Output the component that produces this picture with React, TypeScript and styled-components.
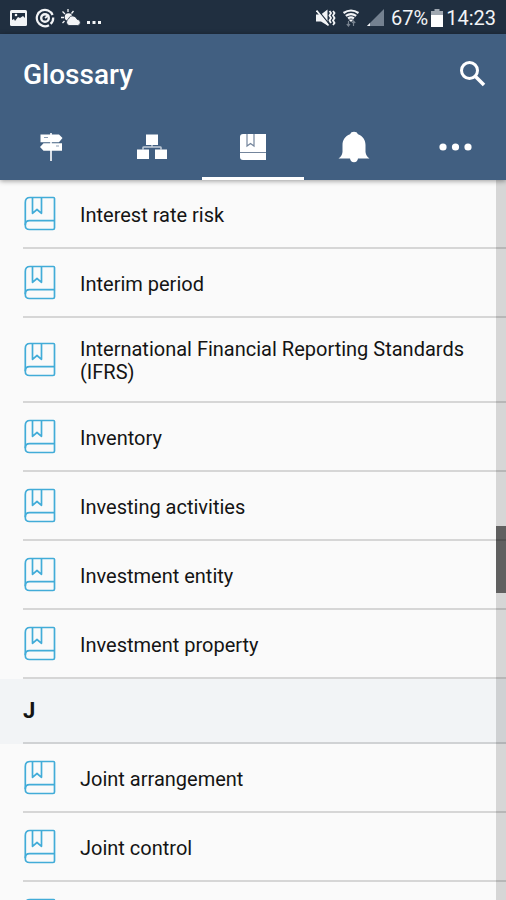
import React, { useState } from "react";
import styled, { createGlobalStyle } from "styled-components";

const GlobalStyle = createGlobalStyle`
  *, *::before, *::after { box-sizing: border-box; }
  body { margin: 0; background: #fafafa; }
  button { font: inherit; color: inherit; background: none; border: 0; padding: 0; cursor: pointer; }
  svg { display: block; flex: none; }
`;

const Screen = styled.div`
  display: flex;
  flex-direction: column;
  height: 100vh;
  overflow: hidden;
  background: #fafafa;
  color: #141414;
  font-family: Roboto, "Liberation Sans", sans-serif;
`;

const StatusBar = styled.div`
  flex: none;
  display: flex;
  align-items: center;
  justify-content: space-between;
  height: 34px;
  padding: 0 10px 0 9px;
  background: #202f40;
  color: #f2f4f6;
  font-size: 20px;
  line-height: 24px;
`;

const StatusGroup = styled.div<{ $gap: number }>`
  display: flex;
  align-items: center;
  gap: ${({ $gap }) => $gap}px;
  padding-top: 2px;
`;

const StatusText = styled.div`
  display: flex;
  align-items: center;
  gap: 3px;
`;

const AppBar = styled.header`
  flex: none;
  position: relative;
  z-index: 1;
  background: #415f81;
  color: #fff;
  box-shadow: 0 1px 5px rgba(0, 0, 0, 0.4);
`;

const TitleRow = styled.div`
  display: flex;
  align-items: center;
  justify-content: space-between;
  height: 80px;
  padding: 1px 17px 0 23px;
`;

const Title = styled.h1`
  margin: 0;
  font-size: 28px;
  line-height: 32px;
  font-weight: 500;
`;

const TabList = styled.div`
  display: grid;
  grid-template-columns: repeat(5, 1fr);
  height: 66px;
`;

const Tab = styled.button<{ $active: boolean }>`
  display: flex;
  align-items: center;
  justify-content: center;
  border-top: 3px solid transparent;
  border-bottom: 3px solid ${({ $active }) => ($active ? "#fff" : "transparent")};
`;

const Content = styled.main`
  position: relative;
  flex: 1;
  min-height: 0;
`;

const Scroller = styled.div`
  height: 100%;
  overflow-y: auto;
  scrollbar-width: none;
`;

const ScrollTrack = styled.div`
  position: absolute;
  inset: 0 0 0 auto;
  width: 10px;
  background: rgba(0, 0, 0, 0.14);
  pointer-events: none;
`;

const ScrollThumb = styled.div`
  position: absolute;
  top: 48%;
  width: 100%;
  height: 67px;
  background: rgba(0, 0, 0, 0.55);
`;

const Terms = styled.ul`
  margin: 0;
  padding: 0;
  list-style: none;
`;

const Term = styled.li`
  padding-left: 23px;
`;

const TermButton = styled.button`
  display: flex;
  align-items: center;
  gap: 24px;
  width: 100%;
  min-height: 69px;
  padding-right: 24px;
  border-bottom: 2px solid #d6d6d6;
  text-align: left;
`;

const TermName = styled.span`
  padding: 20px 0 17px;
  font-size: 20px;
  line-height: 23px;
`;

const SectionHeader = styled.h2`
  margin: 0;
  padding-left: 23px;
  background: #f2f4f6;
  font-size: 22px;
  line-height: 63px;
  font-weight: 700;
`;

const SectionLabel = styled.span`
  display: block;
  border-bottom: 2px solid #d0d2d4;
`;

const BookOutline = () => (
  <svg width="33" height="35" viewBox="0 0 33 35" fill="none" stroke="#42acd8" strokeWidth="1.7" strokeLinejoin="round" aria-hidden="true">
    <path d="M7 1.5H30.5Q31.5 1.5 31.5 2.5V32Q31.5 33.5 30 33.5H6.5Q2.3 33.5 2.3 29.5V6.5Q2.3 1.5 7 1.5Z" />
    <path d="M2.3 29Q2.3 24.7 6.5 24.7H31.5" />
    <path d="M9.5 1.5V17.3L14 13.5L18.5 17.3V1.5" />
  </svg>
);

const SignpostIcon = () => (
  <svg width="24" height="30" viewBox="0 0 24 30" fill="#fff" aria-hidden="true">
    <path d="M11 1H13V29H11Z" opacity=".8" />
    <path d="M1.5 2.5H20L23.5 6L20 10.2H1.5Z" />
    <path d="M23 11.3V18.8H4.5L1 15L4.5 11.3Z" />
    <path d="M5 5.5H9M17 14H20" stroke="#8b9db3" strokeWidth="1" />
  </svg>
);

const SitemapIcon = () => (
  <svg width="32" height="28" viewBox="0 0 32 28" fill="#fff" aria-hidden="true">
    <path d="M10 1.5H22V12H10ZM1 16.5H13V26H1ZM19 16.5H31V26H19Z" />
    <path d="M16 12V14M7 17V14.5Q7 14 8 14H24Q25 14 25 14.5V17" fill="none" stroke="#c5cfda" strokeWidth="1.5" />
  </svg>
);

const BookSolid = () => (
  <svg width="28" height="28" viewBox="0 0 28 28" aria-hidden="true">
    <path d="M4 1H27V27H4Q1 27 1 24V4Q1 1 4 1Z" fill="#fff" />
    <path d="M1 19.5H27M8 1V13L11.5 10.5L15 13V1" fill="none" stroke="#74859c" strokeWidth="1.2" />
  </svg>
);

const BellIcon = () => (
  <svg width="32" height="32" viewBox="0 0 32 32" fill="#fff" aria-hidden="true">
    <path d="M16 .8Q19 .8 20 3.2C25 5 27.5 9 27.5 14V21Q28 25 31.5 27.5H20Q19.5 31.2 16 31.2T12 27.5H.5Q4 25 4.5 21V14C4.5 9 7 5 12 3.2Q13 .8 16 .8Z" />
  </svg>
);

const MoreIcon = () => (
  <svg width="34" height="28" viewBox="0 0 34 28" fill="#fff" aria-hidden="true">
    <circle cx="5" cy="14" r="3.6" />
    <circle cx="17.5" cy="14" r="3.6" />
    <circle cx="30" cy="14" r="3.6" />
  </svg>
);

const SearchIcon = () => (
  <svg width="32" height="32" viewBox="0 0 32 32" fill="none" stroke="#fff" strokeWidth="3" aria-hidden="true">
    <circle cx="12.5" cy="11.5" r="8" />
    <path d="M18 17L27 26" strokeWidth="3.6" />
  </svg>
);

const PictureIcon = () => (
  <svg width="20" height="18" viewBox="0 0 20 18" aria-hidden="true">
    <rect x="1" y="1" width="17" height="16" rx="1.5" fill="#f2f4f6" />
    <path d="M3 4H16V9L14 7L11 9L9 8L6 12L5 10L3 11Z" fill="#202f40" />
    <circle cx="7" cy="6" r="1.3" fill="#f2f4f6" />
  </svg>
);

const SwirlIcon = () => (
  <svg width="20" height="20" viewBox="0 0 20 20" fill="none" stroke="#f2f4f6" aria-hidden="true">
    <path d="M17.6 7A8.2 8.2 0 1 0 14 17.2" strokeWidth="2.2" />
    <path d="M18.2 9.5A8.2 8.2 0 0 1 15.6 15.9" strokeWidth="2.2" />
    <circle cx="10" cy="10" r="3.8" strokeWidth="2.4" />
    <path d="M10 10L14 7" strokeWidth="1.6" />
  </svg>
);

const WeatherIcon = () => (
  <svg width="20" height="18" viewBox="0 0 20 18" aria-hidden="true">
    <path d="M7 0V3M1.5 2.5L4 5M0 8.5H3M12.5 2L10.5 4.5M1.5 14L3.5 12" stroke="#f2f4f6" strokeWidth="1.3" />
    <circle cx="7.5" cy="8" r="3.8" fill="#f2f4f6" />
    <path d="M8 16.5A3.5 3.5 0 0 1 7.5 10Q9 6 13 7.2Q15.5 8 16 10.2Q19.3 10.7 19.3 13.5T16.5 16.5Z" fill="#f2f4f6" stroke="#202f40" strokeWidth=".8" />
  </svg>
);

const DotsIcon = () => (
  <svg width="16" height="18" viewBox="0 0 16 18" fill="#f2f4f6" aria-hidden="true">
    <path d="M0 12H3V15H0ZM5.5 12H8.5V15H5.5ZM11 12H14V15H11Z" />
  </svg>
);

const MutedIcon = () => (
  <svg width="20" height="18" viewBox="0 0 20 18" fill="none" stroke="#f2f4f6" aria-hidden="true">
    <path d="M0 5.5H5L11.5 .5V16.5L5 12.5H0Z" fill="#f2f4f6" stroke="none" />
    <path d="M1.8 1L13.5 15.5" stroke="#202f40" strokeWidth="1.2" />
    <path d="M.5 1.5L12.5 16.5" strokeWidth="1.8" />
    <path d="M13.5 2L15 4L13.5 6.5L15 9L13.5 11.5L15 14M17 2L18.5 4L17 6.5L18.5 9L17 11.5L18.5 14L17 16" strokeWidth="1.8" />
  </svg>
);

const WifiIcon = () => (
  <svg width="18" height="18" viewBox="0 0 18 18" aria-hidden="true">
    <path d="M1.5 4Q9-1 16.5 4M3.8 6.8Q9 3.3 14.2 6.8M6 9.3Q9 7.3 12 9.3" fill="none" stroke="#f2f4f6" strokeWidth="2.2" />
    <path d="M6.5 10.5H11.5L9 13Z" fill="#f2f4f6" />
    <path d="M6.5 12V17M4.8 15L6.5 17L8 15M11.5 17V12M10 14L11.5 12L13.2 14" fill="none" stroke="#78838f" strokeWidth="1.2" />
  </svg>
);

const SignalIcon = () => (
  <svg width="19" height="18" viewBox="0 0 19 18" aria-hidden="true">
    <path d="M18 0V17H1Z" fill="#748190" />
    <path d="M4 14V17H1Z" fill="#f2f4f6" />
  </svg>
);

const BatteryIcon = () => (
  <svg width="12" height="18" viewBox="0 0 12 18" aria-hidden="true">
    <path d="M3.5 0H8.5V2H12V7H0V2H3.5Z" fill="#a0a8b1" />
    <path d="M0 6H12V18H0Z" fill="#fff" />
  </svg>
);

const tabs = [
  { label: "Guide", Icon: SignpostIcon },
  { label: "Structure", Icon: SitemapIcon },
  { label: "Glossary", Icon: BookSolid },
  { label: "Notifications", Icon: BellIcon },
  { label: "More", Icon: MoreIcon },
];

const termsI = [
  "Interest rate risk",
  "Interim period",
  "International Financial Reporting Standards (IFRS)",
  "Inventory",
  "Investing activities",
  "Investment entity",
  "Investment property",
];

const termsJ = ["Joint arrangement", "Joint control", "Joint operation"];

const TermList = ({ terms }: { terms: string[] }) => (
  <Terms>
    {terms.map((term) => (
      <Term key={term}>
        <TermButton type="button">
          <BookOutline />
          <TermName>{term}</TermName>
        </TermButton>
      </Term>
    ))}
  </Terms>
);

export default function App() {
  const [active, setActive] = useState("Glossary");
  return (
    <Screen>
      <GlobalStyle />
      <StatusBar>
        <StatusGroup $gap={6}>
          <PictureIcon />
          <SwirlIcon />
          <WeatherIcon />
          <DotsIcon />
        </StatusGroup>
        <StatusGroup $gap={6}>
          <MutedIcon />
          <WifiIcon />
          <SignalIcon />
          <StatusText>
            <span>67%</span>
            <BatteryIcon />
            <span>14:23</span>
          </StatusText>
        </StatusGroup>
      </StatusBar>
      <AppBar>
        <TitleRow>
          <Title>Glossary</Title>
          <button type="button" aria-label="Search">
            <SearchIcon />
          </button>
        </TitleRow>
        <TabList role="tablist">
          {tabs.map(({ label, Icon }) => (
            <Tab
              key={label}
              type="button"
              role="tab"
              aria-label={label}
              aria-selected={active === label}
              $active={active === label}
              onClick={() => setActive(label)}
            >
              <Icon />
            </Tab>
          ))}
        </TabList>
      </AppBar>
      <Content>
        <Scroller>
          <TermList terms={termsI} />
          <SectionHeader>
            <SectionLabel>J</SectionLabel>
          </SectionHeader>
          <TermList terms={termsJ} />
        </Scroller>
        <ScrollTrack>
          <ScrollThumb />
        </ScrollTrack>
      </Content>
    </Screen>
  );
}
